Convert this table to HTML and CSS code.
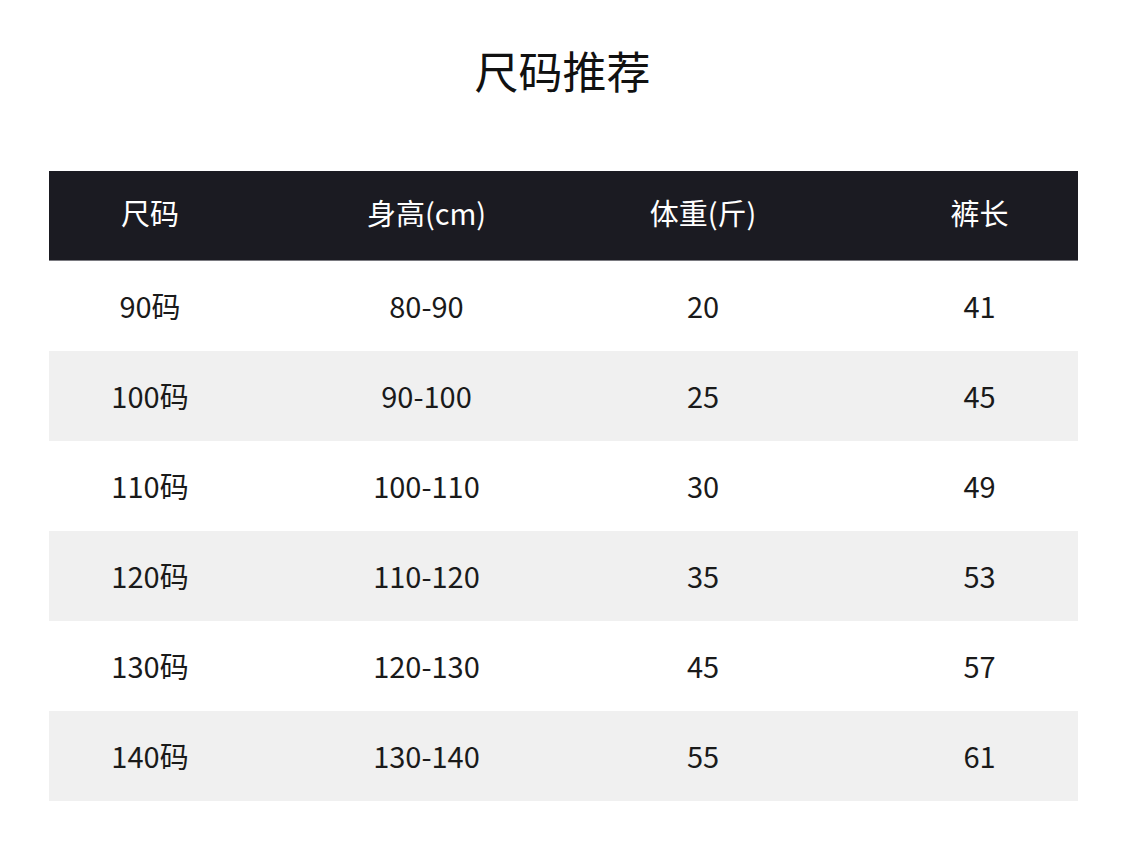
FILE: index.html
```html
<!DOCTYPE html>
<html lang="zh-CN">
<head>
<meta charset="utf-8">
<title>尺码推荐</title>
<link rel="stylesheet" href="styles.css">
</head>
<body>
<main class="page">
  <h1 class="title">尺码推荐</h1>
  <div class="table">
    <div class="row head">
      <div class="cell">尺码</div>
      <div class="cell">身高(cm)</div>
      <div class="cell">体重(斤)</div>
      <div class="cell">裤长</div>
    </div>
    <div class="row">
      <div class="cell">90码</div><div class="cell">80-90</div><div class="cell">20</div><div class="cell">41</div>
    </div>
    <div class="row alt">
      <div class="cell">100码</div><div class="cell">90-100</div><div class="cell">25</div><div class="cell">45</div>
    </div>
    <div class="row">
      <div class="cell">110码</div><div class="cell">100-110</div><div class="cell">30</div><div class="cell">49</div>
    </div>
    <div class="row alt">
      <div class="cell">120码</div><div class="cell">110-120</div><div class="cell">35</div><div class="cell">53</div>
    </div>
    <div class="row">
      <div class="cell">130码</div><div class="cell">120-130</div><div class="cell">45</div><div class="cell">57</div>
    </div>
    <div class="row alt">
      <div class="cell">140码</div><div class="cell">130-140</div><div class="cell">55</div><div class="cell">61</div>
    </div>
  </div>
</main>
</body>
</html>
```
FILE: styles.css
```css
html, body {
  margin: 0;
  padding: 0;
  background: #ffffff;
}
body {
  font-family: "Noto Sans CJK SC", "Noto Sans", sans-serif;
  color: #1a1a1a;
}
.page {
  width: 1125px;
  height: 847px;
  padding-top: 42px;
  box-sizing: border-box;
}
.title {
  margin: 0;
  height: 56px;
  line-height: 56px;
  text-align: center;
  font-size: 44px;
  font-weight: 400;
  color: #111;
}
.table {
  margin: 73px 0 0 49px;
  width: 1029px;
}
.row {
  display: grid;
  grid-template-columns: repeat(4, 200px);
  column-gap: 76.5px;
  padding-left: 1px;
  padding-bottom: 2px;
  box-sizing: border-box;
  height: 90px;
  align-items: center;
  font-size: 29px;
  font-weight: 400;
}
.row.head {
  height: 90px;
  padding-bottom: 7px;
  background: #1b1b22;
  color: #ffffff;
  border-bottom: 1px solid #7a7a80;
}
.row.alt {
  background: #f0f0f0;
}
.cell {
  text-align: center;
  line-height: 1;
}
```
